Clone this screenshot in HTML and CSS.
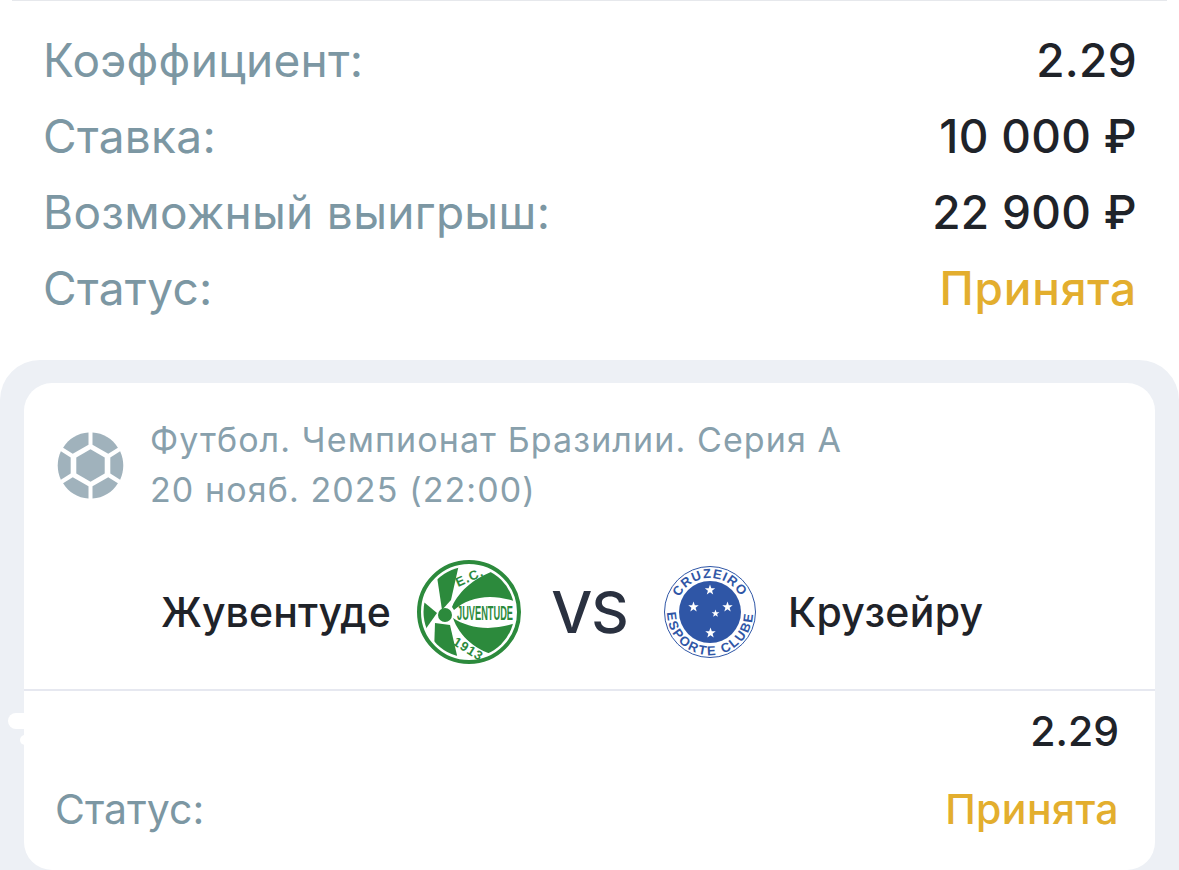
FILE: index.html
```html
<!DOCTYPE html>
<html lang="ru">
<head>
    <meta charset="UTF-8" />
    <meta name="viewport" content="width=device-width, initial-scale=1.0" />
    <title>Ставка</title>
    <link rel="stylesheet" href="styles.css">
</head>
<body>
    <div class="top-line"></div>
    <div class="summary">
        <div class="row"><span class="label">Коэффициент:</span><span class="value">2.29</span></div>
        <div class="row"><span class="label">Ставка:</span><span class="value">10 000 ₽</span></div>
        <div class="row"><span class="label">Возможный выигрыш:</span><span class="value">22 900 ₽</span></div>
        <div class="row"><span class="label">Статус:</span><span class="value accepted">Принята</span></div>
    </div>

    <div class="outer-card">
        <div class="blob blob-big"></div>
        <div class="blob blob-small"></div>
        <div class="card">
            <div class="event">
                <svg class="ball" viewBox="0 0 66 66">
                    <path d="M31 0.5V12.5L15.5 21.5L6 15.5C11.5 6.5 20.5 1 31 0.5Z" />
                    <path d="M35 0.5V12.5L50.5 21.5L60 15.5C54.500 6.500 45.500 1 35 0.5Z" />
                    <path d="M33 17L47 25V41L33 49L19 41V25Z" />
                    <path d="M3.800 19L13.500 25V41L3.800 47C-0.300 38 -0.300 28 3.800 19Z" />
                    <path d="M62.200 19L52.500 25V41L62.200 47C66.300 38 66.300 28 62.200 19Z" />
                    <path d="M31 65.500V53.500L15.500 44.500L6 50.500C11.500 59.500 20.500 65 31 65.500Z" />
                    <path d="M35 65.500V53.500L50.500 44.500L60 50.500C54.500 59.500 45.500 65 35 65.500Z" />
                </svg>
                <div class="event-text">
                    <div>Футбол. Чемпионат Бразилии. Серия А</div>
                    <div>20 нояб. 2025 (22:00)</div>
                </div>
            </div>

            <div class="match">
                <span class="team team-home">Жувентуде</span>
                <svg class="logo logo-home" viewBox="0 0 104 104">
                    <defs>
                        <clipPath id="home-clip"><circle cx="52" cy="52" r="45.500" /></clipPath>
                    </defs>
                    <circle cx="52" cy="52" r="50" fill="#fff" stroke="#2c8a3c" stroke-width="4" />
                    <g clip-path="url(#home-clip)" fill="#2c8a3c">
                        <path d="M19 10L43 0L34 40L25 50Z" />
                        <path d="M0 38L8 43L20 53L8 70L0 74Z" />
                        <path d="M18 63L33 65L42 104L17 92Z" />
                        <path d="M35 47C42 30 60 16 82 9L104 30V44C78 32 52 36 37 50Z" />
                        <path d="M36 58C52 69 78 72 104 61V80L82 96C60 92 42 76 36 58Z" />
                    </g>
                    <circle cx="28" cy="55" r="7" fill="#2c8a3c" />
                    <text class="logo-text-home" transform="translate(40 60) scale(1 1.400)" textLength="56" lengthAdjust="spacingAndGlyphs">JUVENTUDE</text>
                    <text class="logo-text-small" transform="translate(41 27) rotate(-24)">E.C.</text>
                    <text class="logo-text-small" transform="translate(35 84) rotate(32)">1913</text>
                </svg>
                <span class="vs">VS</span>
                <svg class="logo logo-away" viewBox="0 0 92 92">
                    <defs>
                        <path id="arc-top" d="M12 46A34 34 0 0 1 80 46" />
                        <path id="arc-bottom" d="M4.500 34.900A43 43 0 1 0 87.500 34.900" />
                        <polygon id="star" points="0,-5.500 1.300,-1.800 5.200,-1.700 2.100,0.700 3.200,4.400 0,2.200 -3.200,4.400 -2.100,0.700 -5.200,-1.700 -1.300,-1.800" />
                    </defs>
                    <circle cx="46" cy="46" r="45.500" fill="#fff" stroke="#2f56a6" stroke-width="1" />
                    <circle cx="46" cy="46" r="31" fill="#2f56a6" />
                    <text class="logo-text-away"><textPath href="#arc-top" startOffset="50%" text-anchor="middle">CRUZEIRO</textPath></text>
                    <text class="logo-text-away logo-text-bottom"><textPath href="#arc-bottom" startOffset="50%" text-anchor="middle">ESPORTE CLUBE</textPath></text>
                    <g fill="#fff">
                        <use href="#star" x="46" y="24" />
                        <use href="#star" x="29.500" y="41" />
                        <use href="#star" x="63.500" y="41" />
                        <use href="#star" transform="translate(51.500 47.500) scale(0.750)" />
                        <use href="#star" x="46.500" y="67" />
                    </g>
                </svg>
                <span class="team team-away">Крузейру</span>
            </div>

            <div class="card-rows">
                <div class="card-row"><span class="label"></span><span class="value">2.29</span></div>
                <div class="card-row"><span class="label">Статус:</span><span class="value accepted">Принята</span></div>
            </div>
        </div>
    </div>
</body>
</html>
```

FILE: styles.css
```css
html, body {
    height: 870px;
    overflow: hidden;
}

body {
    margin: 0;
    background-color: #fff;
    font-family: Inter, "Liberation Sans", sans-serif;
    position: relative;
}

.top-line {
    height: 1px;
    margin: 0 12px;
    background-color: #e6e8ec;
}

.summary {
    padding: 21px 42px 34px 43px;
}

.row {
    display: flex;
    justify-content: space-between;
    align-items: center;
    height: 76px;
    font-size: 46px;
    letter-spacing: 0.3px;
}

.label {
    color: #7c97a3;
}

.value {
    color: #1f2329;
    font-weight: 450;
}

.accepted {
    color: #e3ae2e;
    font-weight: 500;
    letter-spacing: 0.8px;
}

.outer-card {
    background-color: #edf0f5;
    border-radius: 40px 40px 0 0;
    padding: 23px 24px 0;
}

.card {
    background-color: #fff;
    border-radius: 28px;
    height: 487px;
    overflow: hidden;
}

/* замазанные куски слева от карточки */
.blob {
    position: absolute;
    background-color: #fff;
}

.blob-big {
    left: 8px;
    top: 713px;
    width: 18px;
    height: 16px;
    border-radius: 8px 0 0 8px;
}

.blob-small {
    left: 20px;
    top: 735px;
    width: 6px;
    height: 10px;
    border-radius: 5px 0 0 5px;
}

.event {
    display: flex;
    align-items: center;
    gap: 26px;
    padding: 32px 33px 0;
}

.ball {
    width: 67px;
    height: 67px;
    fill: #a0b2bc;
}

.event-text {
    color: #88a0ac;
    font-size: 34px;
    line-height: 50px;
    letter-spacing: 1.100px;
}

.match {
    display: flex;
    align-items: center;
    height: 104px;
    margin-top: 45px;
    padding-left: 137px;
    font-size: 41px;
    color: #1f2329;
}

.team-home {
    width: 256px;
    flex-shrink: 0;
    font-weight: 500;
    letter-spacing: 0.1px;
}

.team-away {
    font-weight: 500;
    letter-spacing: 0.3px;
}

.logo-home {
    width: 104px;
    height: 104px;
    flex-shrink: 0;
}

.vs {
    box-sizing: border-box;
    width: 143px;
    padding-right: 6px;
    text-align: center;
    font-size: 58px;
    font-weight: 500;
    letter-spacing: -1px;
    color: #2a3140;
}

.logo-away {
    width: 92px;
    height: 92px;
    flex-shrink: 0;
    margin-right: 32px;
}

.logo-text-home {
    font-family: "Liberation Sans", sans-serif;
    font-size: 15px;
    font-weight: 700;
    fill: #2c8a3c;
}

.logo-text-small {
    font-family: "Liberation Sans", sans-serif;
    font-size: 13px;
    font-weight: 700;
    letter-spacing: 1px;
    fill: #2c8a3c;
}

.logo-text-away {
    font-family: "Liberation Sans", sans-serif;
    font-size: 13px;
    font-weight: 700;
    letter-spacing: 1px;
    fill: #2f56a6;
}

.logo-text-bottom {
    letter-spacing: 1.800px;
}

.card-rows {
    margin-top: 25px;
    border-top: 2px solid #e6e8f0;
    padding: 1px 36px 0 31px;
}

.card-row {
    display: flex;
    justify-content: space-between;
    align-items: center;
    height: 78px;
    font-size: 41px;
}

.card-row .accepted {
    letter-spacing: 0.4px;
}
```
